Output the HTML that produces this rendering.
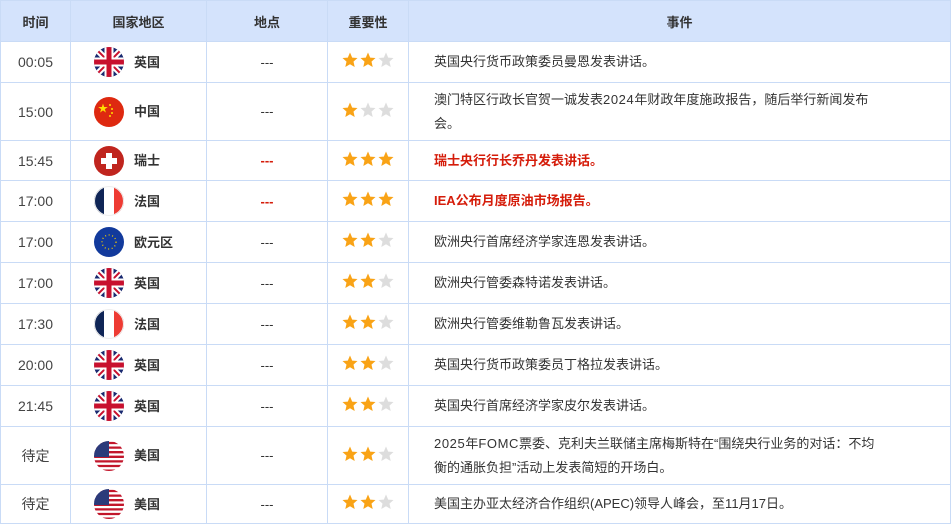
<!DOCTYPE html>
<html><head><meta charset="utf-8"><style>
body{margin:0;background:#fff;font-family:"Liberation Sans","Noto Sans CJK SC",sans-serif;font-size:13px;color:#333;}
table{border-collapse:collapse;width:951px;table-layout:fixed;}
td,th{border:1px solid #c9dbf6;padding:0;text-align:center;}
th{background:#d4e3fc;height:40px;font-weight:bold;font-size:13px;color:#333;}
td.t{font-size:14px;color:#444;}
.c{display:flex;align-items:center;padding-left:23px;}
.c svg{width:30px;height:30px;margin-right:10px;display:block}
.c span{font-weight:bold;font-size:13px;margin-top:-2px}
.st svg{display:block;margin:-4px auto 0}
td.e{text-align:left;padding:0 10px 0 25px;line-height:24px;white-space:nowrap}
.n{letter-spacing:0.6px}
.r{color:#d51c0a;font-weight:bold}
tr{height:41px}
</style></head><body>
<svg width="0" height="0" style="position:absolute"><defs>
<clipPath id="cc"><circle cx="15" cy="15" r="15"/></clipPath>
<polygon id="s" points="8,0.5 10.2,5.6 15.5,6 11.5,9.6 12.7,15 8,12.2 3.3,15 4.5,9.6 0.5,6 5.8,5.6"/>
<g id="uk"><g clip-path="url(#cc)"><rect width="30" height="30" fill="#1a2a70"/><path d="M0 0L30 30M30 0L0 30" stroke="#fff" stroke-width="6"/><path d="M0 0L30 30M30 0L0 30" stroke="#c8102e" stroke-width="2"/><path d="M15 0V30M0 15H30" stroke="#fff" stroke-width="9"/><path d="M15 0V30M0 15H30" stroke="#c8102e" stroke-width="5"/></g></g>
<g id="cn"><circle cx="15" cy="15" r="15" fill="#de2910"/><text x="4" y="15" font-size="10" fill="#ffde00">★</text><circle cx="16" cy="8" r="1" fill="#ffde00"/><circle cx="18" cy="12" r="1" fill="#ffde00"/><circle cx="18" cy="16" r="1" fill="#ffde00"/><circle cx="16" cy="19" r="1" fill="#ffde00"/></g>
<g id="ch"><circle cx="15" cy="15" r="15" fill="#c0251e"/><path d="M12 7h6v5h5v6h-5v5h-6v-5h-5v-6h5z" fill="#fff"/></g>
<g id="fr"><g clip-path="url(#cc)"><rect width="10" height="30" fill="#0f2556"/><rect x="10" width="10" height="30" fill="#fff"/><rect x="20" width="10" height="30" fill="#ee3b33"/></g><circle cx="15" cy="15" r="14.5" fill="none" stroke="#eee"/></g>
<g id="eu"><circle cx="15" cy="15" r="15" fill="#123a9c"/><circle cx="15" cy="15" r="7" fill="none" stroke="#f5cc00" stroke-width="1.3" stroke-dasharray="1 2.6"/></g>
<g id="us"><g clip-path="url(#cc)"><rect width="30" height="30" fill="#fff"/><path d="M0 2h30M0 6.6h30M0 11.2h30M0 15.8h30M0 20.4h30M0 25h30M0 29.6h30" stroke="#c2162b" stroke-width="2.3"/><rect width="15" height="16" fill="#2b3a7a"/></g></g>
<g id="s3"><use href="#s" fill="#f9a316"/><use href="#s" x="18" fill="#f9a316"/><use href="#s" x="36" fill="#f9a316"/></g>
<g id="s2"><use href="#s" fill="#f9a316"/><use href="#s" x="18" fill="#f9a316"/><use href="#s" x="36" fill="#ddd"/></g>
<g id="s1"><use href="#s" fill="#f9a316"/><use href="#s" x="18" fill="#ddd"/><use href="#s" x="36" fill="#ddd"/></g>
</defs></svg>
<table>
<colgroup><col style="width:70px"><col style="width:136px"><col style="width:121px"><col style="width:81px"><col></colgroup>
<tr><th>时间</th><th>国家地区</th><th>地点</th><th>重要性</th><th>事件</th></tr>
<tr style="height:41px"><td class="t">00:05</td><td><div class="c"><svg viewBox="0 0 30 30"><use href="#uk"/></svg><span>英国</span></div></td><td>---</td><td class="st"><svg width="52" height="16"><use href="#s2"/></svg></td><td class="e">英国央行货币政策委员曼恩发表讲话。</td></tr>
<tr style="height:58px"><td class="t">15:00</td><td><div class="c"><svg viewBox="0 0 30 30"><use href="#cn"/></svg><span>中国</span></div></td><td>---</td><td class="st"><svg width="52" height="16"><use href="#s1"/></svg></td><td class="e">澳门特区行政长官贺一诚发表<span class="n">2024</span>年财政年度施政报告，随后举行新闻发布<br>会。</td></tr>
<tr style="height:40px"><td class="t">15:45</td><td><div class="c"><svg viewBox="0 0 30 30"><use href="#ch"/></svg><span>瑞士</span></div></td><td class="r">---</td><td class="st"><svg width="52" height="16"><use href="#s3"/></svg></td><td class="e r">瑞士央行行长乔丹发表讲话。</td></tr>
<tr><td class="t">17:00</td><td><div class="c"><svg viewBox="0 0 30 30"><use href="#fr"/></svg><span>法国</span></div></td><td class="r">---</td><td class="st"><svg width="52" height="16"><use href="#s3"/></svg></td><td class="e r">IEA公布月度原油市场报告。</td></tr>
<tr><td class="t">17:00</td><td><div class="c"><svg viewBox="0 0 30 30"><use href="#eu"/></svg><span>欧元区</span></div></td><td>---</td><td class="st"><svg width="52" height="16"><use href="#s2"/></svg></td><td class="e">欧洲央行首席经济学家连恩发表讲话。</td></tr>
<tr><td class="t">17:00</td><td><div class="c"><svg viewBox="0 0 30 30"><use href="#uk"/></svg><span>英国</span></div></td><td>---</td><td class="st"><svg width="52" height="16"><use href="#s2"/></svg></td><td class="e">欧洲央行管委森特诺发表讲话。</td></tr>
<tr><td class="t">17:30</td><td><div class="c"><svg viewBox="0 0 30 30"><use href="#fr"/></svg><span>法国</span></div></td><td>---</td><td class="st"><svg width="52" height="16"><use href="#s2"/></svg></td><td class="e">欧洲央行管委维勒鲁瓦发表讲话。</td></tr>
<tr><td class="t">20:00</td><td><div class="c"><svg viewBox="0 0 30 30"><use href="#uk"/></svg><span>英国</span></div></td><td>---</td><td class="st"><svg width="52" height="16"><use href="#s2"/></svg></td><td class="e">英国央行货币政策委员丁格拉发表讲话。</td></tr>
<tr><td class="t">21:45</td><td><div class="c"><svg viewBox="0 0 30 30"><use href="#uk"/></svg><span>英国</span></div></td><td>---</td><td class="st"><svg width="52" height="16"><use href="#s2"/></svg></td><td class="e">英国央行首席经济学家皮尔发表讲话。</td></tr>
<tr style="height:58px"><td class="t">待定</td><td><div class="c"><svg viewBox="0 0 30 30"><use href="#us"/></svg><span>美国</span></div></td><td>---</td><td class="st"><svg width="52" height="16"><use href="#s2"/></svg></td><td class="e"><span class="n">2025</span>年<span class="n">FOMC</span>票委、克利夫兰联储主席梅斯特在“围绕央行业务的对话：不均<br>衡的通胀负担”活动上发表简短的开场白。</td></tr>
<tr style="height:39px"><td class="t">待定</td><td><div class="c"><svg viewBox="0 0 30 30"><use href="#us"/></svg><span>美国</span></div></td><td>---</td><td class="st"><svg width="52" height="16"><use href="#s2"/></svg></td><td class="e">美国主办亚太经济合作组织(APEC)领导人峰会，至11月17日。</td></tr>
</table>
</body></html>
